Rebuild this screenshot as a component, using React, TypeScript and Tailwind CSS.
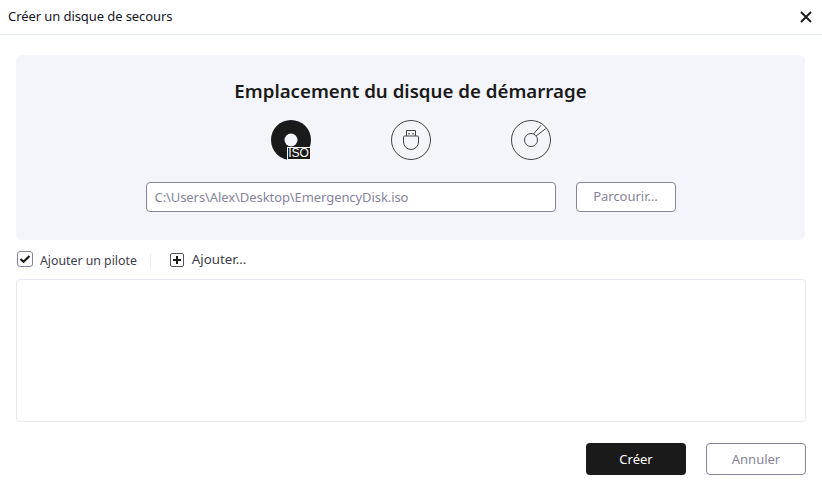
import React from "react";

const font = { fontFamily: '"Noto Sans", sans-serif' };

function IsoIcon() {
  return (
    <div className="relative w-10 h-10">
      <svg width="40" height="40" viewBox="0 0 40 40" className="block">
        <circle cx="20" cy="20" r="20" fill="#1a1a1a" />
        <circle cx="20" cy="20" r="6.500" fill="#f4f5fb" />
      </svg>
      <div className="absolute left-[16px] top-[27px] w-[24px] h-[13px] bg-[#1a1a1a] border border-white text-white text-[12px] leading-[11px] text-center [font-family:'Liberation_Sans',sans-serif]">
        ISO
      </div>
    </div>
  );
}

function UsbIcon() {
  return (
    <svg width="40" height="40" viewBox="0 0 40 40" fill="none" stroke="#444" strokeWidth="1" className="block">
      <circle cx="20" cy="20" r="19.500" />
      <path d="M12.500 17q0 -1 1 -1h13q1 0 1 1v5a7.500 7.500 0 0 1 -15 0z" />
      <path d="M15.500 16v-5.500h9v5.500" />
      <path d="M18 13v1.500M22 13v1.500" strokeWidth="1.300" />
    </svg>
  );
}

function DiscIcon() {
  return (
    <svg width="40" height="40" viewBox="0 0 40 40" fill="none" stroke="#444" strokeWidth="1" className="block">
      <circle cx="20" cy="20" r="19.500" />
      <circle cx="20" cy="20" r="6.500" />
      <path d="M22.500 14L30 5.300M25 16l9.700 -7.300" />
    </svg>
  );
}

export default function App() {
  return (
    <div style={font} className="w-[822px] h-[484px] bg-white flex flex-col overflow-hidden">
      <div className="h-[35px] shrink-0 border-b border-[#e2e9f5] flex items-center justify-between pl-2 pr-[10px]">
        <span className="text-[13px] tracking-[-0.08px] text-[#16161e]">Créer un disque de secours</span>
        <svg width="12" height="12" viewBox="0 0 12 12" stroke="#1f1f1f" strokeWidth="2" className="block">
          <path d="M1 1l10 10M11 1L1 11" />
        </svg>
      </div>

      <div className="flex flex-col px-4 pt-5">
        <div className="w-[789px] h-[185px] bg-[#f4f5fb] rounded-md flex flex-col items-center pt-[22px]">
          <h1 className="text-[18.700px] leading-[28px] font-semibold text-[#1a1a1a]">Emplacement du disque de démarrage</h1>
          <div className="flex gap-20 mt-[15px]">
            <IsoIcon />
            <UsbIcon />
            <DiscIcon />
          </div>
          <div className="flex gap-5 mt-[22px]">
            <div className="w-[410px] h-[30px] bg-white border border-[#85859a] rounded flex items-center px-2 pt-[1px] text-[13px] tracking-[-0.08px] text-[#85859a]">
              C:\Users\Alex\Desktop\EmergencyDisk.iso
            </div>
            <div className="w-[100px] h-[30px] bg-white border border-[#85859a] rounded flex items-center justify-center text-[13px] tracking-[-0.02px] text-[#85859a]">
              Parcourir...
            </div>
          </div>
        </div>

        <div className="flex items-center h-[39px] text-[#3c3c4a]">
          <div className="w-4 h-4 ml-[1px] -mt-[1px] rounded-[3px] border border-[#85859a] flex items-center justify-center bg-white">
            <svg width="12" height="12" viewBox="0 0 12 12" fill="none" stroke="#1a1a1a" strokeWidth="2.200" className="block">
              <path d="M1.500 6l3 2.800L10.500 3" />
            </svg>
          </div>
          <span className="ml-[7px] mt-[3px] text-[12.300px]">Ajouter un pilote</span>
          <div className="w-px h-[14px] bg-[#ececf2] ml-[13px] mt-[2px]" />
          <div className="w-[14px] h-[14px] ml-[19px] rounded-[2px] border border-[#55555f] flex items-center justify-center">
            <svg width="10" height="10" viewBox="0 0 10 10" stroke="#1a1a1a" strokeWidth="2" className="block">
              <path d="M5 1v8M1 5h8" />
            </svg>
          </div>
          <span className="ml-2 text-[13.300px] text-[#3c3c4a]">Ajouter...</span>
        </div>

        <div className="w-[790px] h-[143px] border border-[#e8e8f2] rounded" />

        <div className="flex justify-end gap-5 mt-[21px]">
          <div className="w-[100px] h-[32px] bg-[#1a1a1a] rounded flex items-center justify-center pt-[1px] text-[13px] text-white">Créer</div>
          <div className="w-[100px] h-[32px] bg-white border border-[#85859a] rounded flex items-center justify-center pt-[1px] text-[13px] text-[#85859a]">Annuler</div>
        </div>
      </div>
    </div>
  );
}
